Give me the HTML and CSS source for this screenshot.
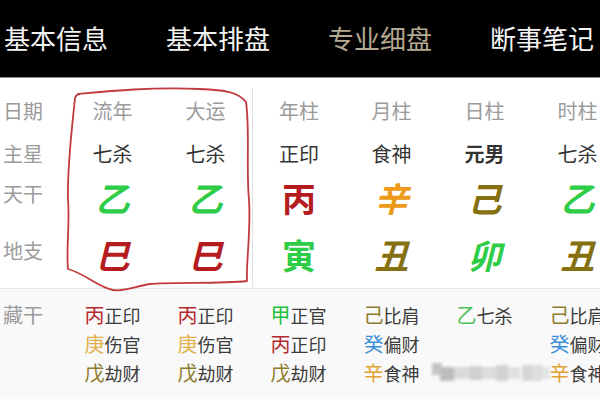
FILE: index.html
```html
<!DOCTYPE html>
<html lang="zh">
<head>
<meta charset="utf-8">
<link rel="stylesheet" href="styles.css">
</head>
<body>
<div class="page">
  <nav class="tabs">
    <span class="tab">基本信息</span>
    <span class="tab">基本排盘</span>
    <span class="tab active">专业细盘</span>
    <span class="tab">断事笔记</span>
  </nav>

  <section class="chart">
    <div class="lbl r1">日期</div>
    <div class="cell r1 head">流年</div>
    <div class="cell r1 head">大运</div>
    <div class="cell r1 head sep">年柱</div>
    <div class="cell r1 head">月柱</div>
    <div class="cell r1 head">日柱</div>
    <div class="cell r1 head">时柱</div>

    <div class="lbl r2">主星</div>
    <div class="cell r2 star">七杀</div>
    <div class="cell r2 star">七杀</div>
    <div class="cell r2 star sep">正印</div>
    <div class="cell r2 star">食神</div>
    <div class="cell r2 star me">元男</div>
    <div class="cell r2 star">七杀</div>

    <div class="lbl r3 big-lbl">天干</div>
    <div class="cell r3 big wood slant">乙</div>
    <div class="cell r3 big wood slant">乙</div>
    <div class="cell r3 big fire sep">丙</div>
    <div class="cell r3 big metal slant">辛</div>
    <div class="cell r3 big earth slant">己</div>
    <div class="cell r3 big wood slant">乙</div>

    <div class="lbl r4 big-lbl">地支</div>
    <div class="cell r4 big fire slant">巳</div>
    <div class="cell r4 big fire slant">巳</div>
    <div class="cell r4 big wood sep">寅</div>
    <div class="cell r4 big earth slant">丑</div>
    <div class="cell r4 big wood slant">卯</div>
    <div class="cell r4 big earth slant">丑</div>
  </section>

  <section class="hidden-stems">
    <div class="lbl-h">藏干</div>
    <div class="hs">
      <div class="hs-line"><span class="s fire">丙</span>正印</div>
      <div class="hs-line"><span class="s gold">庚</span>伤官</div>
      <div class="hs-line"><span class="s olive">戊</span>劫财</div>
    </div>
    <div class="hs">
      <div class="hs-line"><span class="s fire">丙</span>正印</div>
      <div class="hs-line"><span class="s gold">庚</span>伤官</div>
      <div class="hs-line"><span class="s olive">戊</span>劫财</div>
    </div>
    <div class="hs">
      <div class="hs-line"><span class="s wood">甲</span>正官</div>
      <div class="hs-line"><span class="s fire">丙</span>正印</div>
      <div class="hs-line"><span class="s olive">戊</span>劫财</div>
    </div>
    <div class="hs">
      <div class="hs-line"><span class="s olive">己</span>比肩</div>
      <div class="hs-line"><span class="s water">癸</span>偏财</div>
      <div class="hs-line"><span class="s orange">辛</span>食神</div>
    </div>
    <div class="hs">
      <div class="hs-line"><span class="s wood2">乙</span>七杀</div>
    </div>
    <div class="hs">
      <div class="hs-line"><span class="s olive">己</span>比肩</div>
      <div class="hs-line"><span class="s water">癸</span>偏财</div>
      <div class="hs-line"><span class="s orange">辛</span>食神</div>
    </div>
  </section>

  <div class="mosaic">
    <i class="m1"></i><i class="m2"></i><i class="m3"></i><i class="m4"></i><i class="m5"></i><i class="m6"></i><i class="m7"></i><i class="m8"></i><i class="m9"></i><i class="m10"></i>
  </div>

  <svg class="loop" width="600" height="400" viewBox="0 0 600 400">
    <path d="M78,94 C110,91 150,87 200,89 C225,90 238,92 246,102 C250,130 246,170 249,200 C251,232 246,262 247,281 C222,284 172,282 150,284 C136,286 126,292 113,290 C99,288 86,274 68,269 C66,250 70,222 68,200 C67,168 72,128 75,98 C76,95 77,94 80,94" fill="none" stroke="#c23a3f" stroke-width="1.8" stroke-linecap="round" stroke-linejoin="round"/>
  </svg>
</div>
</body>
</html>
```

FILE: styles.css
```css
* { box-sizing: border-box; }
html, body {
  margin: 0;
  padding: 0;
  background: #ffffff;
}
body {
  width: 600px;
  height: 400px;
  overflow: hidden;
  font-family: "Noto Sans CJK SC", "Noto Sans", sans-serif;
}
.page {
  position: relative;
  width: 600px;
  height: 400px;
  overflow: hidden;
}

/* top tabs */
.tabs {
  height: 78px;
  background: #000;
  border-bottom: 1px solid #8a8a8a;
  display: flex;
  align-items: center;
  gap: 58px;
  padding: 0 0 2px 4px;
  white-space: nowrap;
}
.tab {
  flex: none;
  width: 104px;
  font-size: 26px;
  line-height: 1;
  color: #f4f4f4;
}
.tab.active { color: #b4a991; }

/* main chart */
.chart {
  display: grid;
  grid-template-columns: 66px repeat(6, 93px);
  grid-template-rows: 45px 40px 52px 62px;
  padding-top: 10px;
  padding-bottom: 1px;
  width: 624px;
}
.lbl {
  display: flex;
  align-items: center;
  padding-left: 3px;
  font-size: 20px;
  color: #9b9b9b;
}
.big-lbl { padding-bottom: 12px; }
.cell {
  display: flex;
  align-items: center;
  justify-content: center;
}
.sep { border-left: 1px solid #e2e2e2; }
.head {
  font-size: 20px;
  color: #9b9b9b;
}
.star {
  font-size: 20px;
  color: #333;
}
.star.me { font-weight: 700; color: #333; }
.big {
  font-size: 34px;
  font-weight: 700;
  line-height: 1;
  padding-bottom: 2px;
}
.slant { font-style: italic; }

.wood { color: #2fcc47; }
.fire { color: #b51c1f; }
.metal { color: #ec9a18; }
.earth { color: #857012; }

/* hidden stems */
.hidden-stems {
  border-top: 1px solid #e6e6e6;
  background: #f9f9f9;
  display: grid;
  grid-template-columns: 66px repeat(6, 93px);
  padding-top: 11px;
  height: 111px;
  width: 624px;
}
.lbl-h {
  padding-left: 3px;
  font-size: 20px;
  line-height: 29px;
  color: #9b9b9b;
}
.hs {
  display: flex;
  flex-direction: column;
  align-items: center;
}
.hs-line {
  height: 29px;
  line-height: 29px;
  font-size: 18px;
  color: #3c3c3c;
  white-space: nowrap;
}
.s { font-size: 20px; }
.hidden-stems .fire { color: #b52a2e; }
.gold { color: #e2b04a; }
.olive { color: #8e7c2c; }
.hidden-stems .wood { color: #22c03c; }
.wood2 { color: #4cc25c; }
.water { color: #3a8fd9; }
.orange { color: #e2a235; }

/* blurred watermark */
.mosaic {
  position: absolute;
  left: 432px;
  top: 361px;
  width: 118px;
  height: 22px;
  filter: blur(1.5px);
}
.mosaic i {
  position: absolute;
  display: block;
}
.m1 { left: 0; top: 2px; width: 10px; height: 12px; background: #c3c3c3; }
.m2 { left: 8px; top: 6px; width: 14px; height: 14px; background: #bdbdbd; }
.m3 { left: 22px; top: 6px; width: 16px; height: 12px; background: #dadada; }
.m4 { left: 38px; top: 5px; width: 12px; height: 14px; background: #d0d0d0; }
.m5 { left: 50px; top: 6px; width: 14px; height: 12px; background: #dcdcdc; }
.m6 { left: 64px; top: 4px; width: 12px; height: 16px; background: #d2d2d2; }
.m7 { left: 76px; top: 6px; width: 12px; height: 12px; background: #e0e0e0; }
.m8 { left: 90px; top: 4px; width: 10px; height: 16px; background: #d6d6d6; }
.m9 { left: 100px; top: 4px; width: 10px; height: 16px; background: #dddddd; }
.m10 { left: 110px; top: 6px; width: 8px; height: 12px; background: #e4e4e4; }

/* hand-drawn red annotation */
.loop {
  position: absolute;
  left: 0;
  top: 0;
  pointer-events: none;
}
```
